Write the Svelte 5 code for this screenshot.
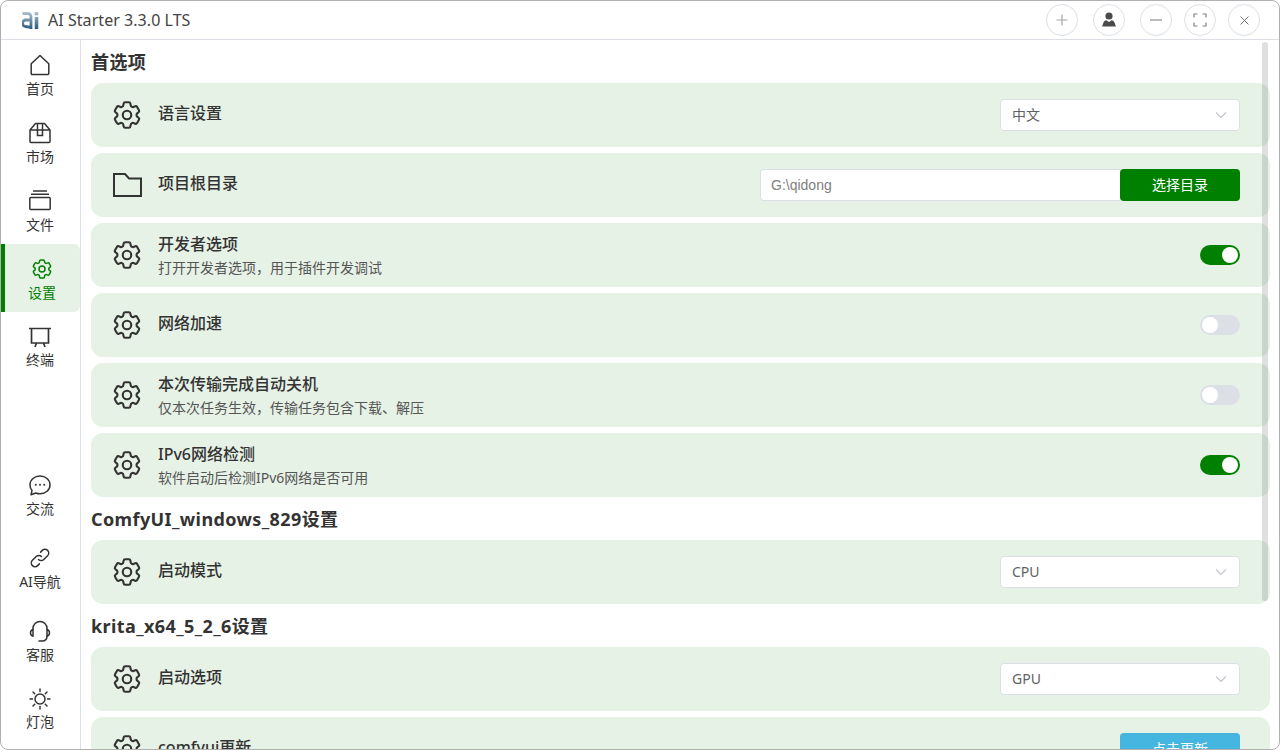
<script>
  const gear =
    'M9.594 3.94c.09-.542.56-.94 1.11-.94h2.593c.55 0 1.02.398 1.11.94l.213 1.281c.063.374.313.686.645.87.074.04.147.083.22.127.324.196.72.257 1.075.124l1.217-.456a1.125 1.125 0 011.37.49l1.296 2.247a1.125 1.125 0 01-.26 1.431l-1.003.827c-.293.24-.438.613-.431.992a6.759 6.759 0 010 .255c-.007.378.138.75.43.99l1.005.828c.424.35.534.954.26 1.43l-1.298 2.247a1.125 1.125 0 01-1.369.491l-1.217-.456c-.355-.133-.75-.072-1.076.124a6.57 6.57 0 01-.22.128c-.331.183-.581.495-.644.869l-.213 1.28c-.09.543-.56.941-1.11.941h-2.594c-.55 0-1.02-.398-1.11-.94l-.213-1.281c-.062-.374-.312-.686-.644-.87a6.52 6.52 0 01-.22-.127c-.325-.196-.72-.257-1.076-.124l-1.217.456a1.125 1.125 0 01-1.369-.49l-1.297-2.247a1.125 1.125 0 01.26-1.431l1.004-.827c.292-.24.437-.613.43-.992a6.932 6.932 0 010-.255c.007-.378-.138-.75-.43-.99l-1.004-.828a1.125 1.125 0 01-.26-1.43l1.297-2.247a1.125 1.125 0 011.37-.491l1.216.456c.356.133.751.072 1.076-.124.072-.044.146-.087.22-.128.332-.183.582-.495.644-.869l.214-1.281z';

  const topNav = [
    { label: '首页', icon: 'home' },
    { label: '市场', icon: 'box' },
    { label: '文件', icon: 'files' },
    { label: '设置', icon: 'gear', active: true },
    { label: '终端', icon: 'board' }
  ];
  const bottomNav = [
    { label: '交流', icon: 'chat' },
    { label: 'AI导航', icon: 'link' },
    { label: '客服', icon: 'headset' },
    { label: '灯泡', icon: 'sun' }
  ];

  const sections = [
    {
      title: '首选项',
      rows: [
        { title: '语言设置', kind: 'select', value: '中文' },
        { title: '项目根目录', kind: 'path', icon: 'folder', value: 'G:\\qidong' },
        { title: '开发者选项', desc: '打开开发者选项，用于插件开发调试', kind: 'toggle', on: true },
        { title: '网络加速', kind: 'toggle', on: false },
        { title: '本次传输完成自动关机', desc: '仅本次任务生效，传输任务包含下载、解压', kind: 'toggle', on: false },
        { title: 'IPv6网络检测', desc: '软件启动后检测IPv6网络是否可用', kind: 'toggle', on: true }
      ]
    },
    {
      title: 'ComfyUI_windows_829设置',
      rows: [{ title: '启动模式', kind: 'select', value: 'CPU' }]
    },
    {
      title: 'krita_x64_5_2_6设置',
      rows: [
        { title: '启动选项', kind: 'select', value: 'GPU' },
        { title: 'comfyui更新', kind: 'update' }
      ]
    }
  ];
</script>

{#snippet navIcon(name)}
  <svg class="nav-icon" viewBox="0 0 24 24" fill="none" stroke="currentColor" stroke-width="1.5">
    {#if name === 'home'}
      <path d="M12 2.500 3.200 10.800v9.700a1 1 0 0 0 1 1h15.600a1 1 0 0 0 1-1v-9.700z" stroke-linejoin="round" />
    {:else if name === 'box'}
      <path d="M2 9 7.500 2.500h9L22 9v11.500a1 1 0 0 1-1 1H3a1 1 0 0 1-1-1z" stroke-linejoin="round" />
      <path d="M2 9h20M9.500 2.500v12h5v-12" />
    {:else if name === 'files'}
      <path d="M5 2h14M3 5.300h18" />
      <rect x="1.800" y="8.500" width="20.400" height="12" rx="1" />
    {:else if name === 'gear'}
      <path d={gear} stroke-linejoin="round" />
      <circle cx="12" cy="12" r="3" />
    {:else if name === 'board'}
      <path d="M1 3.500h22M3.500 3.500v14.500h17V3.500M8.500 18l-1.500 4M15.500 18l1.500 4" stroke-width="1.700" />
    {:else if name === 'chat'}
      <path d="M12 3c5.500 0 10 3.800 10 8.900s-4.500 8.900-10 8.900c-1.500 0-3-.3-4.300-.8L3 21.800l1-4.300C2.800 15.900 2 14 2 11.900 2 6.800 6.500 3 12 3z" stroke-linejoin="round" />
      <circle cx="7.800" cy="11.800" r="1" fill="currentColor" stroke="none" />
      <circle cx="12" cy="11.800" r="1" fill="currentColor" stroke="none" />
      <circle cx="16.200" cy="11.800" r="1" fill="currentColor" stroke="none" />
    {:else if name === 'link'}
      <path d="M10.500 13.500a3.700 3.700 0 0 0 5.300 0l3.800-3.800a3.700 3.700 0 0 0-5.300-5.300l-1.700 1.700" stroke-linecap="round" />
      <path d="M13.500 10.500a3.700 3.700 0 0 0-5.300 0l-3.800 3.800a3.700 3.700 0 0 0 5.300 5.300l1.700-1.700" stroke-linecap="round" />
    {:else if name === 'headset'}
      <path d="M5 11V9.500a7 7 0 0 1 14 0V11" />
      <path d="M5 10.500a3.500 3.500 0 0 0-2.500 3.300A3.500 3.500 0 0 0 5 17.200zM19 10.500a3.500 3.500 0 0 1 2.500 3.300 3.500 3.500 0 0 1-2.500 3.400z" stroke-linejoin="round" />
      <path d="M19 17c0 3-2 5-5 5h-3" stroke-linecap="round" />
    {:else if name === 'sun'}
      <circle cx="12" cy="12" r="5" />
      <path d="M12 2v2.500M12 19.500V22M2 12h2.500M19.500 12H22M5 5l1.700 1.700M17.300 17.300 19 19M5 19l1.700-1.700M17.300 6.700 19 5" stroke-linecap="round" />
    {/if}
  </svg>
{/snippet}

{#snippet navItem(item)}
  <div class="nav-item" class:active={item.active}>
    {@render navIcon(item.icon)}
    <span>{item.label}</span>
  </div>
{/snippet}

{#snippet chevron()}
  <svg class="chevron" viewBox="0 0 12 8" fill="none" stroke="currentColor" stroke-width="1.100">
    <path d="M1 1.500 6 6.500 11 1.500" />
  </svg>
{/snippet}

<div class="window">
  <header class="titlebar">
    <svg class="logo" viewBox="0 0 17 17" fill="none" stroke="url(#logo-fade)" stroke-width="2.800">
      <defs>
        <linearGradient id="logo-fade" gradientUnits="userSpaceOnUse" x1="0" y1="0" x2="0" y2="17">
          <stop offset="0" stop-color="#b0c3d1" />
          <stop offset="1" stop-color="#2a5a7e" />
        </linearGradient>
      </defs>
      <path d="M.5 1.500h5.500a3 3 0 0 1 3 3V17" />
      <path d="M9 8H3.800a3 3 0 0 0 0 6.500l5.200.8" />
      <path d="M14.500 0v3.200M14.500 5v12" stroke-width="3.600" />
    </svg>
    <span class="app-name">AI Starter 3.3.0 LTS</span>
    <div class="win-buttons">
      <button class="round wide soft" aria-label="add">
        <svg viewBox="0 0 14 14" fill="none" stroke="currentColor" stroke-width="1.200"><path d="M7 1.500v11M1.500 7h11" /></svg>
      </button>
      <button class="round wide user" aria-label="user">
        <svg viewBox="0 0 16 16" fill="currentColor"><circle cx="8" cy="4" r="3.600" /><path d="M5.300 8.300 8 10l2.700-1.700c1.300.3 2.300 1 2.800 2.200l1.400 4H1.100l1.400-4c.5-1.200 1.500-1.900 2.800-2.200z" /></svg>
      </button>
      <button class="round soft" aria-label="minimize">
        <svg viewBox="0 0 14 14" fill="none" stroke="currentColor" stroke-width="1.500"><path d="M1 7h12" /></svg>
      </button>
      <button class="round" aria-label="maximize">
        <svg viewBox="0 0 14 14" fill="none" stroke="currentColor" stroke-width="1.200"><path d="M1 4.500V1h3.500M9.500 1H13v3.500M13 9.500V13H9.500M4.500 13H1V9.500" /></svg>
      </button>
      <button class="round" aria-label="close">
        <svg class="small" viewBox="0 0 14 14" fill="none" stroke="currentColor" stroke-width="1.200"><path d="M2 2l10 10M12 2 2 12" /></svg>
      </button>
    </div>
  </header>

  <div class="body">
    <nav class="sidebar">
      <div class="nav-group">
        {#each topNav as item}
          {@render navItem(item)}
        {/each}
      </div>
      <div class="nav-group lower">
        {#each bottomNav as item}
          {@render navItem(item)}
        {/each}
      </div>
    </nav>

    <main class="content">
      {#each sections as section}
        <h2>{section.title}</h2>
        {#each section.rows as row}
          <div class="card">
            {#if row.icon === 'folder'}
              <svg class="row-icon" viewBox="0 0 34 34" fill="none" stroke="currentColor" stroke-width="2">
                <path d="M4 6h11l4 4.500h12V28H4z" />
              </svg>
            {:else}
              <svg class="row-icon" viewBox="0 0 24 24" fill="none" stroke="currentColor" stroke-width="1.500">
                <path d={gear} stroke-linejoin="round" />
                <circle cx="12" cy="12" r="3" />
              </svg>
            {/if}
            <div class="row-text">
              <div class="row-title">{row.title}</div>
              {#if row.desc}
                <div class="row-desc">{row.desc}</div>
              {/if}
            </div>

            {#if row.kind === 'select'}
              <div class="select">
                <span>{row.value}</span>
                {@render chevron()}
              </div>
            {:else if row.kind === 'path'}
              <div class="path-group">
                <input type="text" value={row.value} />
                <button class="primary">选择目录</button>
              </div>
            {:else if row.kind === 'toggle'}
              <span class="toggle" class:on={row.on}><i></i></span>
            {:else if row.kind === 'update'}
              <button class="update">点击更新</button>
            {/if}
          </div>
        {/each}
      {/each}
      <div class="scrollbar"></div>
    </main>
  </div>
</div>

<style>
  :global(body) {
    margin: 0;
    background: #fff;
    overflow: hidden;
  }

  .window {
    box-sizing: border-box;
    height: 750px;
    display: flex;
    flex-direction: column;
    border: 1px solid #b0b0b0;
    border-radius: 8px;
    background: #fff;
    overflow: hidden;
    color: #333;
    font-family: 'Noto Sans', 'Noto Sans CJK SC', sans-serif;
  }

  .titlebar {
    flex: none;
    height: 38px;
    display: flex;
    align-items: center;
    border-bottom: 1px solid #dcdfe6;
    padding-left: 21px;
  }

  .logo {
    flex: none;
    width: 17px;
    height: 17px;
    margin-top: 1px;
  }

  .app-name {
    margin-left: 9px;
    font-size: 16px;
    color: #444;
    letter-spacing: 0.05px;
  }

  .win-buttons {
    margin-left: auto;
    margin-right: 19px;
    display: flex;
    gap: 12px;
  }

  .round {
    width: 32px;
    height: 32px;
    padding: 0;
    display: flex;
    align-items: center;
    justify-content: center;
    border: 1px solid #dcdfe6;
    border-radius: 50%;
    background: #fff;
    color: #808080;
  }

  .round.wide {
    margin-right: 3px;
  }

  .round.soft {
    color: #a6a6a6;
  }

  .round svg {
    width: 14px;
    height: 14px;
  }

  .round svg.small {
    width: 11px;
    height: 11px;
    color: #666;
  }

  .round.user {
    color: #4a4a4a;
  }

  .round.user svg {
    width: 16px;
    height: 16px;
  }

  .body {
    flex: 1;
    min-height: 0;
    display: flex;
  }

  .sidebar {
    flex: none;
    width: 79px;
    display: flex;
    flex-direction: column;
    justify-content: space-between;
    border-right: 1px solid #dcdfe6;
  }

  .nav-group {
    display: flex;
    flex-direction: column;
  }

  .nav-group.lower {
    gap: 5px;
    padding-bottom: 7px;
  }

  .nav-item {
    box-sizing: border-box;
    height: 68px;
    display: flex;
    flex-direction: column;
    align-items: center;
    padding: 13px 1px 0 0;
    gap: 3px;
    font-size: 14px;
    line-height: 18px;
    color: #333;
  }

  .nav-item:last-child {
    gap: 2px;
  }

  .lower .nav-item:last-child {
    margin-top: -5px;
  }

  .nav-item.active {
    border-left: 4px solid #008000;
    border-radius: 0 6px 6px 0;
    background: #e6f2e6;
    color: #008000;
  }

  .nav-icon {
    width: 24px;
    height: 24px;
  }

  .content {
    position: relative;
    flex: 1;
    min-width: 0;
    padding: 0 9px 0 10px;
    overflow: hidden;
  }

  h2 {
    margin: 0;
    height: 43px;
    font-size: 18px;
    font-weight: 700;
    line-height: 45px;
    letter-spacing: 0.4px;
    color: #333;
  }

  .card {
    box-sizing: border-box;
    height: 64px;
    margin-bottom: 6px;
    display: flex;
    align-items: center;
    padding: 0 30px 0 19px;
    border-radius: 12px;
    background: #e6f2e6;
  }

  .card:has(+ h2) {
    margin-bottom: 0;
  }

  .row-icon {
    flex: none;
    width: 34px;
    height: 34px;
    color: #333;
  }

  .row-text {
    flex: 1;
    min-width: 0;
    margin-left: 14px;
  }

  .row-title {
    font-size: 16px;
    font-weight: 500;
    line-height: 24px;
    color: #333;
  }

  .row-title:only-child {
    padding-bottom: 4px;
  }

  .row-title:not(:only-child) {
    padding-top: 2px;
  }

  .row-desc {
    font-size: 14px;
    line-height: 24px;
    color: #555;
  }

  .select {
    box-sizing: border-box;
    width: 240px;
    height: 32px;
    display: flex;
    align-items: center;
    justify-content: space-between;
    padding: 0 12px 0 11px;
    border: 1px solid #dcdfe6;
    border-radius: 4px;
    background: #fff;
    font-size: 14px;
    color: #606266;
  }

  .select span {
    padding-bottom: 2px;
  }

  .chevron {
    width: 12px;
    height: 8px;
    color: #c0c4cc;
  }

  .path-group {
    display: flex;
  }

  input {
    box-sizing: border-box;
    width: 360px;
    height: 32px;
    padding: 0 10px;
    border: 1px solid #dcdfe6;
    border-right: none;
    border-radius: 4px 0 0 4px;
    font-family: 'Liberation Sans', sans-serif;
    font-size: 14px;
    color: #808080;
    outline: none;
  }

  button {
    font-family: inherit;
  }

  .primary,
  .update {
    width: 120px;
    height: 32px;
    padding: 0 0 2px;
    border: none;
    border-radius: 4px;
    font-size: 14px;
    color: #fff;
  }

  .primary {
    background: #008000;
  }

  .update {
    background: #44b6e0;
  }

  .toggle {
    box-sizing: border-box;
    width: 40px;
    height: 20px;
    display: flex;
    padding: 2px;
    border-radius: 10px;
    background: #dcdfe6;
  }

  .toggle i {
    width: 16px;
    height: 16px;
    border-radius: 50%;
    background: #fff;
  }

  .toggle.on {
    justify-content: flex-end;
    background: #008000;
  }

  .scrollbar {
    position: absolute;
    top: 2px;
    right: 11px;
    width: 6px;
    height: 559px;
    border-radius: 3px;
    background: rgba(60, 70, 70, 0.17);
  }
</style>
